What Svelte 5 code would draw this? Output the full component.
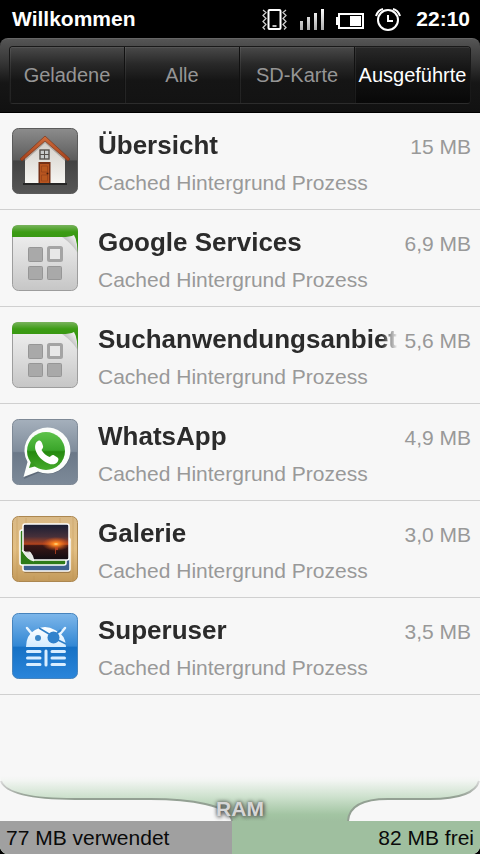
<script>
	const tabs = ['Geladene', 'Alle', 'SD-Karte', 'Ausgeführte'];

	const processes = [
		{ name: 'Übersicht', size: '15 MB', icon: 'house' },
		{ name: 'Google Services', size: '6,9 MB', icon: 'generic' },
		{ name: 'Suchanwendungsanbieter', size: '5,6 MB', icon: 'generic' },
		{ name: 'WhatsApp', size: '4,9 MB', icon: 'chat' },
		{ name: 'Galerie', size: '3,0 MB', icon: 'gallery' },
		{ name: 'Superuser', size: '3,5 MB', icon: 'superuser' }
	];

	const usedMb = 77;
	const freeMb = 82;

	let active = $state('Ausgeführte');
	let usedShare = $derived((usedMb / (usedMb + freeMb)) * 100);
</script>

{#snippet house()}
	<defs>
		<linearGradient id="house-bg" x2="0" y2="1">
			<stop offset="0" stop-color="#8c8c8c" />
			<stop offset=".48" stop-color="#5d5d5d" />
			<stop offset=".5" stop-color="#424242" />
			<stop offset="1" stop-color="#565656" />
		</linearGradient>
		<linearGradient id="house-wall" x2="0" y2="1">
			<stop offset="0" stop-color="#d0ccc6" />
			<stop offset="1" stop-color="#f6f5f2" />
		</linearGradient>
		<linearGradient id="house-roof" x2="0" y2="1">
			<stop offset="0" stop-color="#cf6c3b" />
			<stop offset="1" stop-color="#a5401b" />
		</linearGradient>
	</defs>
	<rect x=".5" y=".5" width="65" height="65" rx="6" fill="url(#house-bg)" stroke="#5b5b5b" />
	<path d="M11 55h44v2H11z" fill="#262626" />
	<path d="M13 29 33 11l20 18v26H13z" fill="url(#house-wall)" />
	<path d="M13 33 33 15l20 18v-5L33 11 13 28z" fill="#7c746c" opacity=".45" />
	<path d="M33 8 8 31l2 2 23-20 23 20 2-2z" fill="url(#house-roof)" stroke="#7d3518" stroke-width=".7" />
	<rect x="28" y="22" width="9" height="9" fill="#c9cccb" stroke="#55504a" stroke-width="1.4" />
	<path d="M32.500 22v9M28 26.500h9" stroke="#55504a" />
	<rect x="26.500" y="34" width="12" height="21" fill="#753016" />
	<rect x="28" y="36" width="9" height="19" fill="#b85520" />
	<path d="M29.500 38h6v6h-6zM29.500 47h6v6h-6z" fill="#b9581f" stroke="#93401a" stroke-width=".7" />
	<circle cx="35.500" cy="45.500" r="1" fill="#3b1a0c" />
{/snippet}

{#snippet generic()}
	<defs>
		<linearGradient id="page-bg" x2="0" y2="1">
			<stop offset="0" stop-color="#f3f3f3" />
			<stop offset=".5" stop-color="#dedede" />
			<stop offset="1" stop-color="#c6c6c6" />
		</linearGradient>
		<linearGradient id="page-top" x2="0" y2="1">
			<stop offset="0" stop-color="#79b35d" />
			<stop offset=".25" stop-color="#3c9c14" />
			<stop offset="1" stop-color="#2d8a0c" />
		</linearGradient>
		<linearGradient id="page-curl" x1="0" y1="1" x2="1" y2="0">
			<stop offset="0" stop-color="#cfcfcf" stop-opacity="0" />
			<stop offset=".5" stop-color="#c4c4c4" />
			<stop offset="1" stop-color="#ffffff" />
		</linearGradient>
	</defs>
	<rect x=".5" y=".5" width="65" height="65" rx="6" fill="url(#page-bg)" stroke="#9d9d9d" />
	<path d="M0 12V6q0-6 6-6h54q6 0 6 6v22q-1-11-3-16z" fill="url(#page-top)" />
	<path d="M50 12q8 0 12-2 2 3 3 17-5-8-15-15z" fill="url(#page-curl)" />
	<g fill="#a9a9a9" stroke="#969696">
		<rect x="16.500" y="22.500" width="14" height="14" rx="1" />
		<rect x="16.500" y="41.500" width="14" height="13" rx="1" />
		<rect x="35.500" y="41.500" width="14" height="13" rx="1" />
	</g>
	<rect x="36.500" y="22.500" width="13" height="13" rx="1" fill="#e8e8e8" stroke="#a4a4a4" stroke-width="3" />
{/snippet}

{#snippet chat()}
	<defs>
		<linearGradient id="chat-bg" x2="0" y2="1">
			<stop offset="0" stop-color="#a5b0bc" />
			<stop offset=".49" stop-color="#7f8c9b" />
			<stop offset=".51" stop-color="#6b7888" />
			<stop offset="1" stop-color="#7d8a99" />
		</linearGradient>
		<linearGradient id="chat-fill" x2="0" y2="1">
			<stop offset="0" stop-color="#5ec34b" />
			<stop offset=".48" stop-color="#3aa52a" />
			<stop offset=".52" stop-color="#25890f" />
			<stop offset="1" stop-color="#46ab2c" />
		</linearGradient>
	</defs>
	<rect x=".5" y=".5" width="65" height="65" rx="6" fill="url(#chat-bg)" stroke="#7e8996" />
	<path d="M12 60l4.500-15A23 23 0 1 1 27 53.500z" fill="#36424f" opacity=".4" />
	<path d="M11.500 58l4-15A23 23 0 1 1 26 52.500z" fill="#fbfdfb" />
	<circle cx="34" cy="32" r="19" fill="url(#chat-fill)" />
	<path d="M17 49l2.500-8 5 6z" fill="#37991f" />
	<path
		d="M26 22c2-1 3 0 4 2l1 3c.5 1.500-.5 2.500-1.500 4 2 3.500 4.500 5.500 8 7 1.500-1 2.500-2.500 4-2l4 2.500c1.500 1 1 3 0 4.500-2 2.500-5.500 3-9 1.500-6-2.500-11-7-13-13.500-1-4 0-8 2.500-9z"
		fill="#fff"
	/>
{/snippet}

{#snippet gallery()}
	<defs>
		<linearGradient id="wood" x2="0" y2="1">
			<stop offset="0" stop-color="#d9b986" />
			<stop offset=".5" stop-color="#e3bf83" />
			<stop offset="1" stop-color="#c39a5b" />
		</linearGradient>
		<linearGradient id="sky" x2="0" y2="1">
			<stop offset="0" stop-color="#171d33" />
			<stop offset=".35" stop-color="#46303a" />
			<stop offset=".56" stop-color="#b5441d" />
			<stop offset=".6" stop-color="#3b1715" />
			<stop offset="1" stop-color="#100c12" />
		</linearGradient>
		<radialGradient id="sun">
			<stop offset="0" stop-color="#ffe38a" />
			<stop offset=".2" stop-color="#ff8a22" />
			<stop offset="1" stop-color="#e3531a" stop-opacity="0" />
		</radialGradient>
	</defs>
	<rect x=".5" y=".5" width="65" height="65" rx="6" fill="url(#wood)" stroke="#ac8750" />
	<path d="M5 2v62M14 2v8M22 60v4M37 59v5M48 2v5M61 2v62" stroke="#b98d4c" opacity=".35" />
	<rect x="11.500" y="24" width="47" height="33" rx="2" fill="#765832" opacity=".55" />
	<rect x="11" y="22" width="47" height="33" rx="2" fill="#3d618f" stroke="#fff" stroke-width="1.500" />
	<rect x="8" y="14" width="46" height="35" rx="2" fill="#2e7b17" stroke="#fff" stroke-width="1.500" />
	<path d="M11 10q0-2 2-2h42q2 0 2 2v32q0 2-2 2H21l-10-9z" fill="url(#sky)" />
	<ellipse cx="44" cy="28" rx="14" ry="7" fill="url(#sun)" />
	<path d="M43 31h3v3h-2v4h-1z" fill="#d34c22" opacity=".7" />
	<path d="M21 44 11 35V10q0-2 2-2h42q2 0 2 2v32q0 2-2 2z" fill="none" stroke="#fff" stroke-width="1.500" />
	<path d="M10 34q2 3 8 2 3 3 4 9-7-1-12-11z" fill="#e6e8e4" stroke="#fff" stroke-width=".7" />
{/snippet}

{#snippet superuser()}
	<defs>
		<linearGradient id="su-bg" x2="0" y2="1">
			<stop offset="0" stop-color="#7eb7ea" />
			<stop offset=".5" stop-color="#3287d4" />
			<stop offset=".52" stop-color="#1671c5" />
			<stop offset="1" stop-color="#2a85da" />
		</linearGradient>
		<linearGradient id="su-head" x2="0" y2="1">
			<stop offset="0" stop-color="#fff" />
			<stop offset="1" stop-color="#d4ecff" />
		</linearGradient>
	</defs>
	<rect x=".5" y=".5" width="65" height="65" rx="6" fill="url(#su-bg)" stroke="#4784bd" />
	<path d="m15 15 5 6M53 15l-5 6" stroke="#e9f5ff" stroke-width="2.500" stroke-linecap="round" />
	<path d="M14 34q0-12 9-17 10-6 20 0 11 5 11 17z" fill="url(#su-head)" />
	<path d="m27 15 10 6M46 27l8 4" stroke="#2e7fc8" stroke-width="1.500" />
	<circle cx="26" cy="25" r="3" fill="#3d88c9" />
	<circle cx="41.500" cy="24.500" r="6" fill="#3182cc" />
	<path d="m45 20 4-3" stroke="#3182cc" stroke-width="2" />
	<path
		d="M15.500 38.500H28M15.500 45H28M15.500 51.500H28M40 38.500h12.500M40 45h12.500M40 51.500h12.500"
		stroke="#d8edff"
		stroke-width="3"
		stroke-linecap="round"
	/>
	<path d="M34 38v14" stroke="#d8edff" stroke-width="3" stroke-linecap="round" />
{/snippet}

<div class="screen">
	<div class="statusbar">
		<span class="carrier">Willkommen</span>
		<div class="indicators">
			<svg width="28" height="24" viewBox="0 0 28 24" fill="none" stroke="#fff" aria-hidden="true">
				<rect x="8.500" y="3" width="12" height="19" rx="1" stroke-width="2" />
				<path d="M12.500 19h4" stroke-width="1.500" />
				<path d="M3 3l3 2.500-3 3 3 3-3 3 3 3-3 3 2 2M26 3l-3 2.500 3 3-3 3 3 3-3 3 3 3-2 2" stroke="#ccc" stroke-width="1.300" />
			</svg>
			<svg width="26" height="24" viewBox="0 0 26 24" aria-hidden="true">
				<defs>
					<linearGradient id="signal" gradientUnits="userSpaceOnUse" x1="0" y1="2" x2="0" y2="23">
						<stop offset="0" stop-color="#fff" />
						<stop offset="1" stop-color="#aaa" />
					</linearGradient>
				</defs>
				<path d="M1 14h3v9H1zM8 10h3v13H8zM15 6h3v17h-3zM22 2h3v21h-3z" fill="url(#signal)" />
			</svg>
			<svg width="28" height="24" viewBox="0 0 28 24" aria-hidden="true">
				<path d="M2 6h26v16H2v-4H0V10h2z" fill="#fff" />
				<path d="M4 8h22v12H4z" fill="#000" />
				<path d="M14 9h11v10H14z" fill="#fff" />
			</svg>
			<svg width="26" height="24" viewBox="0 0 26 24" fill="none" stroke="#fff" stroke-width="2" aria-hidden="true">
				<circle cx="13" cy="13" r="10" />
				<path d="M13 8v6h5M1 9q2-6 7-7M25 9q-2-6-7-7" />
			</svg>
			<time>22:10</time>
		</div>
	</div>

	<header>
		<div class="tabs" role="tablist">
			{#each tabs as tab}
				<button
					role="tab"
					aria-selected={active === tab}
					class:active={active === tab}
					onclick={() => (active = tab)}
				>{tab}</button>
			{/each}
		</div>
	</header>

	<main>
		<ul>
			{#each processes as p}
				<li>
					<svg class="icon" width="66" height="66" viewBox="0 0 66 66" aria-hidden="true">
						{#if p.icon === 'house'}
							{@render house()}
						{:else if p.icon === 'chat'}
							{@render chat()}
						{:else if p.icon === 'gallery'}
							{@render gallery()}
						{:else if p.icon === 'superuser'}
							{@render superuser()}
						{:else}
							{@render generic()}
						{/if}
					</svg>
					<div class="info">
						<div class="line">
							<span class="name">{p.name}</span>
							<span class="size">{p.size}</span>
						</div>
						<p>Cached Hintergrund Prozess</p>
					</div>
				</li>
			{/each}
		</ul>
	</main>

	<footer>
		<div class="ram">
			<svg viewBox="0 0 480 45" preserveAspectRatio="none" aria-hidden="true">
				<defs>
					<linearGradient id="ram" x2="0" y2="1">
						<stop offset="0" stop-color="#f7f7f7" />
						<stop offset=".1" stop-color="#f2f5f2" />
						<stop offset=".45" stop-color="#cfe2cf" />
						<stop offset=".85" stop-color="#a3c5a3" />
						<stop offset="1" stop-color="#9fbf9f" />
					</linearGradient>
					<linearGradient id="edge" x2="0" y2="1">
						<stop offset="0" stop-color="#999" stop-opacity=".3" />
						<stop offset=".4" stop-color="#93a093" />
						<stop offset="1" stop-color="#93a093" />
					</linearGradient>
				</defs>
				<path
					d="M0 0C3 17 30 23 75 23H150C190 23 232 29 232 45H348C349 30 362 23 388 23H430C460 23 478 16 480 0z"
					fill="url(#ram)"
				/>
				<path
					d="M1 5C6 18 34 23 75 23H150C190 23 230 29 232 45M348 45C349 30 362 23 388 23H430C460 23 476 16 479 5"
					fill="none"
					stroke="url(#edge)"
					stroke-width="2"
				/>
			</svg>
			<strong>RAM</strong>
		</div>
		<div class="usage">
			<div class="used" style:width="{usedShare}%"></div>
			<span>{usedMb} MB verwendet</span>
			<span>{freeMb} MB frei</span>
		</div>
	</footer>
</div>

<style>
	:global(body) {
		background: #000;
	}

	.screen {
		display: flex;
		flex-direction: column;
		min-height: 100vh;
		font-family: 'Liberation Sans', Arial, sans-serif;
		font-size: 21px;
		background: #000;
	}

	.statusbar {
		display: flex;
		justify-content: space-between;
		align-items: center;
		height: 38px;
		padding: 0 10px 0 12px;
		color: #fff;
		font-weight: bold;
	}

	.indicators {
		display: flex;
		align-items: center;
		gap: 11px;
	}

	time {
		margin-left: 4px;
	}

	header {
		padding: 7px 9px 8px;
		border-top: 1px solid #666;
		border-bottom: 1px solid #000;
		border-radius: 8px 8px 0 0;
		background: linear-gradient(#555, #383838 30%, #161616 60%, #111);
	}

	.tabs {
		display: grid;
		grid-template-columns: repeat(4, 1fr);
		height: 58px;
		box-sizing: border-box;
		border: 1px solid #191919;
		border-bottom-color: #2c2c2c;
		border-radius: 4px;
		overflow: hidden;
	}

	button {
		min-width: 0;
		padding: 0;
		border: 0;
		border-right: 1px solid #111;
		box-shadow: inset 1px 0 #ffffff12, inset 0 1px #ffffff12;
		background: linear-gradient(#494949, #292929 30%, #151515 60%, #131313);
		color: #959595;
		font: 20px 'Liberation Sans', Arial, sans-serif;
		white-space: nowrap;
	}

	button:last-child {
		border-right: 0;
	}

	button.active {
		background: linear-gradient(#292929, #151515 40%, #080808);
		color: #fff;
	}

	main {
		flex: 1;
		background: #f7f7f7;
	}

	ul {
		margin: 0;
		padding: 0;
		list-style: none;
	}

	li {
		display: flex;
		align-items: center;
		gap: 20px;
		height: 96px;
		padding: 0 9px 0 12px;
		border-bottom: 1px solid #d0d0d0;
	}

	.icon {
		flex: none;
	}

	.info {
		flex: 1;
		min-width: 0;
		padding-top: 2px;
	}

	.line {
		display: flex;
		align-items: center;
		gap: 6px;
		line-height: 38px;
	}

	.name {
		flex: 1;
		min-width: 0;
		overflow: hidden;
		white-space: nowrap;
		color: #2b2b2b;
		font-size: 26px;
		font-weight: bold;
		mask-image: linear-gradient(to left, transparent, #000 16px);
	}

	.size {
		padding-top: 4px;
		color: #999;
	}

	p {
		margin: 0;
		color: #999;
		line-height: 34px;
	}

	footer {
		background: #f7f7f7;
		border-radius: 0 0 8px 8px;
		overflow: hidden;
	}

	.ram {
		position: relative;
		height: 45px;
	}

	.ram svg {
		display: block;
		width: 100%;
		height: 100%;
	}

	.ram strong {
		position: absolute;
		left: 0;
		right: 0;
		bottom: 0;
		color: #d6d6d6;
		line-height: 24px;
		text-align: center;
		text-shadow: 0 0 4px #555, 1px 1px 4px #555;
	}

	.usage {
		position: relative;
		display: flex;
		justify-content: space-between;
		padding: 0 6px;
		background: #9fbf9f;
		color: #0a0a0a;
		line-height: 33px;
	}

	.used {
		position: absolute;
		top: 0;
		bottom: 0;
		left: 0;
		background: #a0a0a0;
	}

	.usage span {
		position: relative;
	}
</style>
